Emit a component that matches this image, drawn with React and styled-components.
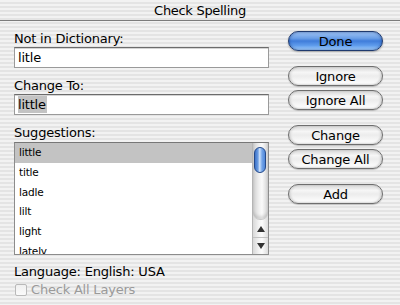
import React from "react";
import styled, { createGlobalStyle, css } from "styled-components";

const GlobalStyle = createGlobalStyle`
  html, body {
    margin: 0;
    padding: 0;
  }
  body {
    width: 400px;
    height: 305px;
    overflow: hidden;
    font-family: "DejaVu Sans", "Noto Sans", sans-serif;
    color: #000;
  }
`;

const Window = styled.div`
  width: 400px;
  height: 305px;
  display: flex;
  flex-direction: column;
  background: repeating-linear-gradient(
    to bottom,
    #f2f2f2 0px,
    #f2f2f2 2px,
    #e4e4e4 2px,
    #e4e4e4 4px
  );
`;

const TitleBar = styled.div`
  height: 21px;
  border-bottom: 1px solid #7c7c7c;
  display: flex;
  align-items: center;
  justify-content: center;
  font-size: 13px;
  letter-spacing: -0.3px;
  padding-top: 1px;
  box-sizing: border-box;
`;

const Body = styled.div`
  display: grid;
  grid-template-columns: 255px 95px;
  column-gap: 19px;
  padding: 10px 0 0 14px;
`;

const LeftColumn = styled.div`
  display: flex;
  flex-direction: column;
`;

const Label = styled.div`
  font-size: 13px;
  letter-spacing: -0.2px;
  line-height: 16px;
  height: 16px;
  margin-top: ${(p) => p.$gap || 0}px;
  color: ${(p) => (p.$dim ? "#9a9a9a" : "#000")};
`;

const Field = styled.div`
  height: 21px;
  box-sizing: border-box;
  background: #fff;
  border: 1px solid #9a9a9a;
  border-top-color: #6c6c6c;
  box-shadow: inset 0 1px 0 #d4d4d4;
  font-size: 13px;
  letter-spacing: -0.2px;
  line-height: 19px;
  padding-left: 3px;
`;

const Selected = styled.span`
  background: #c3c3c3;
  padding: 1px 1px 1px 0;
`;

const ListBox = styled.div`
  margin-top: 1px;
  height: 113px;
  box-sizing: border-box;
  border: 1px solid #8c8c8c;
  border-top-color: #777;
  background: #fff;
  display: grid;
  grid-template-columns: 1fr 16px;
  overflow: hidden;
`;

const Rows = styled.div`
  overflow: hidden;
`;

const Row = styled.div`
  height: 19.75px;
  line-height: 19.75px;
  font-size: 10.5px;
  letter-spacing: -0.2px;
  padding-left: 4px;
  background: ${(p) => (p.$selected ? "#c3c3c3" : "transparent")};
`;

const ScrollBar = styled.div`
  display: flex;
  flex-direction: column;
  border-left: 1px solid #b5b5b5;
  background: linear-gradient(to right, #d8d8d8, #f4f4f4 40%, #fcfcfc 60%, #dcdcdc);
`;

const Track = styled.div`
  flex: 1;
  padding: 4px 2px 0 1px;
  border-bottom: 1px solid #c8c8c8;
  border-radius: 0 0 7px 7px;
  background: linear-gradient(to right, #cfcfcf, #f0f0f0 40%, #fafafa 60%, #d4d4d4);
  box-shadow: inset 0 -3px 3px rgba(0, 0, 0, 0.12);
`;

const Thumb = styled.div`
  height: 26px;
  border-radius: 6px;
  border: 1px solid #24498a;
  background:
    linear-gradient(to right, rgba(255,255,255,0.0) 30%, rgba(255,255,255,0.55) 45%, rgba(255,255,255,0) 70%),
    linear-gradient(to right, #3d73c9, #8ab8f2 50%, #4f86d8);
  box-sizing: border-box;
`;

const Arrow = styled.div`
  height: 17px;
  display: flex;
  align-items: center;
  justify-content: center;
  border-top: ${(p) => (p.$divider ? "1px solid #c2c2c2" : "none")};
  box-sizing: border-box;
`;

const Footer = styled.div`
  margin-top: 9px;
  display: flex;
  flex-direction: column;
`;

const CheckRow = styled.div`
  display: flex;
  align-items: center;
  gap: 4px;
  margin-top: 2px;
`;

const CheckBox = styled.div`
  width: 12px;
  height: 12px;
  margin-left: 1px;
  box-sizing: border-box;
  border: 1px solid #b9b9b9;
  border-radius: 2px;
  background: linear-gradient(to bottom, #f0f0f0, #fafafa);
`;

const RightColumn = styled.div`
  display: flex;
  flex-direction: column;
`;

const ButtonGroup = styled.div`
  display: flex;
  flex-direction: column;
  gap: 4px;
  margin-top: ${(p) => p.$gap || 0}px;
`;

const AquaButton = styled.div`
  height: 20px;
  box-sizing: border-box;
  border-radius: 10px;
  display: flex;
  align-items: center;
  justify-content: center;
  font-size: 13px;
  letter-spacing: -0.2px;
  border: 1px solid #6e6e6e;
  background:
    linear-gradient(to bottom, #d6d6d6 0%, #f6f6f6 30%, #ececec 50%, #f8f8f8 80%, #ffffff 100%);
  box-shadow: 0 1px 1px rgba(0, 0, 0, 0.2), inset 0 -1px 2px rgba(0, 0, 0, 0.1),
    inset 2px 0 2px rgba(0, 0, 0, 0.08), inset -2px 0 2px rgba(0, 0, 0, 0.08);
  ${(p) =>
    p.$default &&
    css`
      border-color: #1f3a6e;
      background:
        linear-gradient(to bottom, #9fc4f4 0%, #6a9ee6 35%, #3f7cda 50%, #5f9cec 75%, #a6d2ff 100%);
      box-shadow: 0 1px 2px rgba(0, 0, 0, 0.3), inset 0 0 3px rgba(10, 40, 110, 0.6);
    `}
`;

const suggestions = ["little", "title", "ladle", "lilt", "light", "lately"];

const App = () => {
  return (
    <>
      <GlobalStyle />
      <Window>
        <TitleBar>Check Spelling</TitleBar>
        <Body>
          <LeftColumn>
            <Label>Not in Dictionary:</Label>
            <Field>litle</Field>
            <Label $gap={10}>Change To:</Label>
            <Field>
              <Selected>little</Selected>
            </Field>
            <Label $gap={10}>Suggestions:</Label>
            <ListBox>
              <Rows>
                {suggestions.map((s, i) => (
                  <Row key={s} $selected={i === 0}>
                    {s}
                  </Row>
                ))}
              </Rows>
              <ScrollBar>
                <Track>
                  <Thumb />
                </Track>
                <Arrow>
                  <svg width="8" height="6" viewBox="0 0 8 6">
                    <path d="M4 0 L8 6 L0 6 Z" fill="#333" />
                  </svg>
                </Arrow>
                <Arrow $divider>
                  <svg width="8" height="6" viewBox="0 0 8 6">
                    <path d="M0 0 L8 0 L4 6 Z" fill="#333" />
                  </svg>
                </Arrow>
              </ScrollBar>
            </ListBox>
            <Footer>
              <Label>Language: English: USA</Label>
              <CheckRow>
                <CheckBox />
                <Label $dim>Check All Layers</Label>
              </CheckRow>
            </Footer>
          </LeftColumn>
          <RightColumn>
            <ButtonGroup>
              <AquaButton $default>Done</AquaButton>
            </ButtonGroup>
            <ButtonGroup $gap={15}>
              <AquaButton>Ignore</AquaButton>
              <AquaButton>Ignore All</AquaButton>
            </ButtonGroup>
            <ButtonGroup $gap={15}>
              <AquaButton>Change</AquaButton>
              <AquaButton>Change All</AquaButton>
            </ButtonGroup>
            <ButtonGroup $gap={15}>
              <AquaButton>Add</AquaButton>
            </ButtonGroup>
          </RightColumn>
        </Body>
      </Window>
    </>
  );
};

export default App;
